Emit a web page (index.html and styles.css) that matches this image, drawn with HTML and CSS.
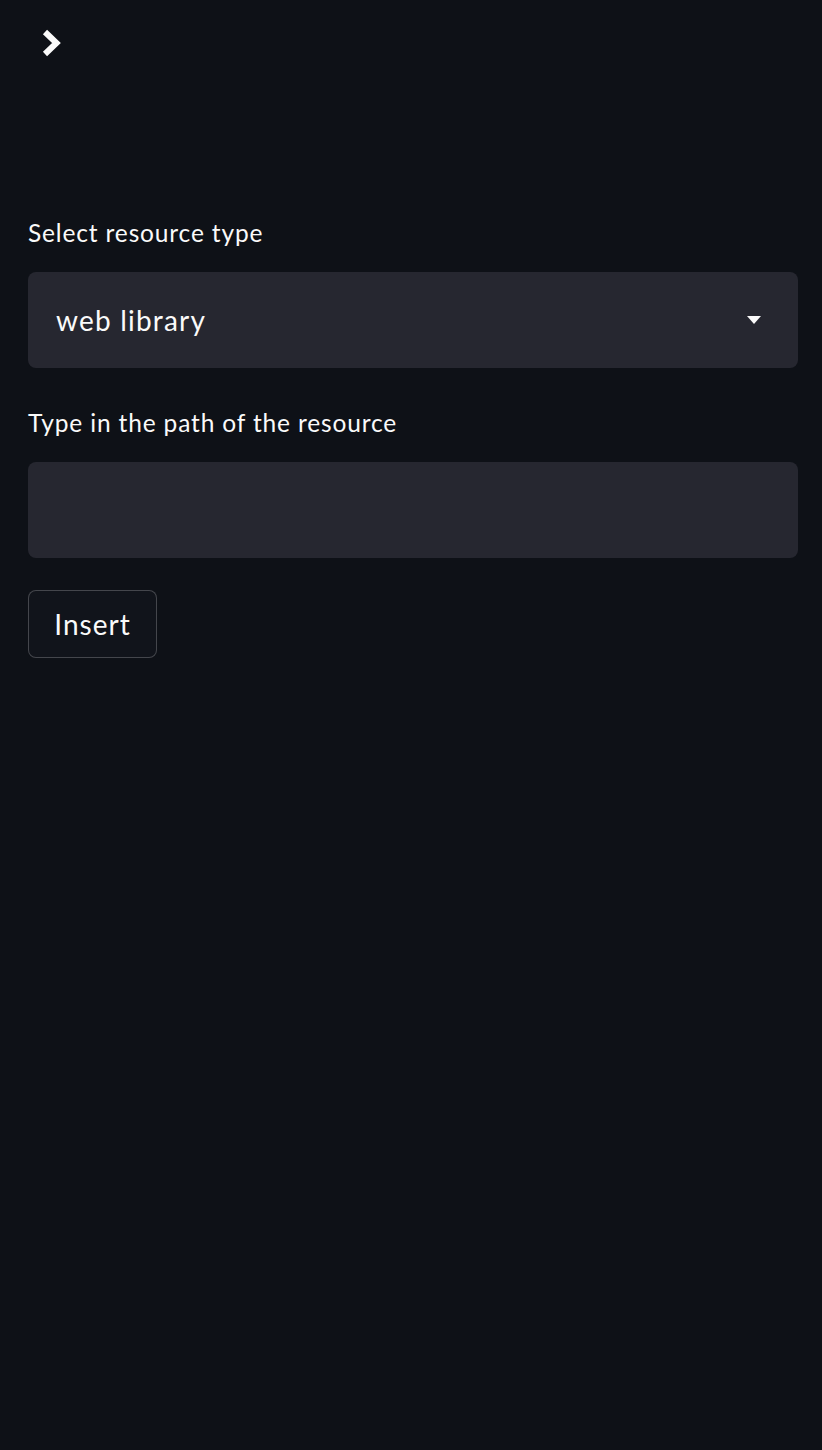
FILE: index.html
```html
<!DOCTYPE html>
<html lang="en">
<head>
<meta charset="utf-8">
<title>Resource</title>
<link rel="stylesheet" href="styles.css">
</head>
<body>
<div class="app">
  <header class="topbar">
    <button class="toggle" aria-label="Open sidebar">
      <svg width="30" height="34" viewBox="0 0 30 34"><polyline points="9,6 20.5,17 9,28" fill="none" stroke="#fafafa" stroke-width="6" stroke-linejoin="miter" stroke-linecap="butt"/></svg>
    </button>
  </header>
  <main class="form">
    <div class="field">
      <label class="label">Select resource type</label>
      <div class="select">
        <span class="select-value">web library</span>
        <svg class="caret" width="14" height="8" viewBox="0 0 14 8"><polygon points="0,0 14,0 7,8" fill="#fafafa"/></svg>
      </div>
    </div>
    <div class="field">
      <label class="label">Type in the path of the resource</label>
      <div class="input"></div>
    </div>
    <div class="actions">
      <button class="btn">Insert</button>
    </div>
  </main>
</div>
</body>
</html>
```
FILE: styles.css
```css
html, body {
  margin: 0;
  padding: 0;
  background: #0e1117;
  color: #fafafa;
  font-family: "Lato", "Noto Sans", sans-serif;
}
.app {
  min-height: 1450px;
  display: flex;
  flex-direction: column;
}
.topbar {
  height: 86px;
  display: flex;
  align-items: flex-start;
  padding: 26px 0 0 36px;
  box-sizing: border-box;
}
.toggle {
  background: none;
  border: 0;
  padding: 0;
  margin: 0;
  width: 30px;
  height: 34px;
  display: block;
}
.toggle svg { display: block; }
.form {
  padding: 129px 24px 0 28px;
  display: flex;
  flex-direction: column;
}
.field {
  display: flex;
  flex-direction: column;
  gap: 21px;
  margin-bottom: 37px;
}
.field:nth-child(2) { margin-bottom: 32px; }
.label {
  font-size: 24.5px;
  line-height: 36px;
  height: 36px;
  letter-spacing: 0.85px;
}
.select, .input {
  height: 96px;
  background: #262730;
  border-radius: 8px;
  box-sizing: border-box;
}
.select {
  display: flex;
  align-items: center;
  justify-content: space-between;
  padding: 0 37px 0 28px;
}
.select-value {
  font-size: 28px;
  line-height: 36px;
  letter-spacing: 1.2px;
}
.caret { display: block; }
.actions { display: flex; }
.btn {
  width: 129px;
  height: 68px;
  background: #11141b;
  color: #fafafa;
  border: 1px solid rgba(250, 250, 250, 0.22);
  border-radius: 8px;
  font-family: "Lato", "Noto Sans", sans-serif;
  font-size: 28px;
  letter-spacing: 1px;
  padding: 0;
}
```
